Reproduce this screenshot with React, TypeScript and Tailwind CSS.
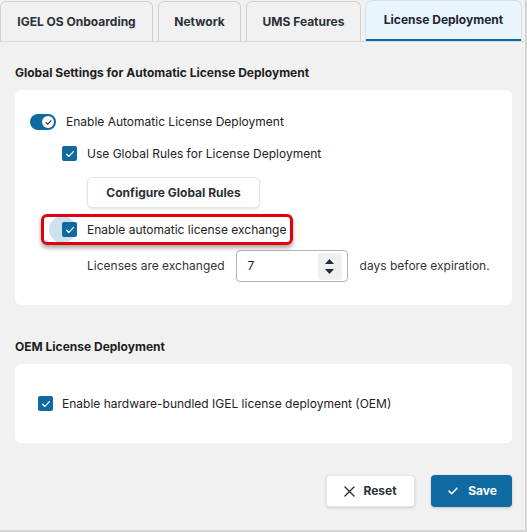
import React from "react";

const Check = ({ className = "" }: { className?: string }) => (
  <svg viewBox="0 0 16 16" className={className} fill="none" stroke="currentColor" strokeWidth="1.8" strokeLinecap="round" strokeLinejoin="round">
    <path d="M3.5 8.2l3 3 6-6.4" />
  </svg>
);

const Checkbox = () => (
  <div className="w-[15px] h-[15px] rounded-[2px] bg-[#0e6aa0] flex items-center justify-center text-white shrink-0">
    <Check className="w-[12px] h-[12px]" />
  </div>
);

const tabs = [
  { label: "IGEL OS Onboarding", w: "w-[153px]" },
  { label: "Network", w: "w-[83px]" },
  { label: "UMS Features", w: "w-[115px]" },
  { label: "License Deployment", w: "w-[155px]", active: true },
];

export default function App() {
  return (
    <div
      className="w-[527px] h-[532px] bg-[#f1f1f1] text-[#222] overflow-hidden border-r-2 border-b-2 border-[#d4d4d4] whitespace-nowrap"
      style={{ fontFamily: "Inter, 'Noto Sans', sans-serif" }}
    >
      <div className="flex gap-[5px] pt-[1px] border-b border-[#d6d6d6] h-[42px]">
        {tabs.map((t) =>
          t.active ? (
            <div
              key={t.label}
              className={`${t.w} h-[40px] rounded-t-[6px] bg-[#e8f5fd] border-b-[2px] border-[#0a6aa0] flex items-center justify-center text-[12px] font-bold text-[#1f2630] shadow-[0_0_0_1px_#d8dde0]`}
            >
              {t.label}
            </div>
          ) : (
            <div
              key={t.label}
              className={`${t.w} h-[40px] rounded-t-[6px] bg-[#f1f1f1] border border-b-0 border-[#d2d2d2] flex items-center justify-center text-[12px] font-bold text-[#2a3038]`}
            >
              {t.label}
            </div>
          )
        )}
      </div>

      <div className="px-[15px]">
        <div className="mt-[23px] text-[12px] font-bold text-[#1e1e1e] leading-[16px]">
          Global Settings for Automatic License Deployment
        </div>

        <div className="mt-[9px] w-[497px] h-[215px] bg-white rounded-[6px] pl-[15px] pt-[24px] relative">
          <div className="flex items-center h-[16px]">
            <div className="w-[26px] h-[16px] rounded-full bg-[#0e6aa0] relative">
              <div className="absolute right-[2px] top-[2px] w-[12px] h-[12px] rounded-full bg-white flex items-center justify-center text-[#1b2a36]">
                <Check className="w-[9px] h-[9px]" />
              </div>
            </div>
            <span className="ml-[10px] text-[12px] leading-[16px]">Enable Automatic License Deployment</span>
          </div>

          <div className="flex items-center mt-[16px] ml-[32px] h-[15px]">
            <Checkbox />
            <span className="ml-[10px] text-[12px] leading-[16px]">Use Global Rules for License Deployment</span>
          </div>

          <div className="ml-[57px] mt-[16px] w-[173px] h-[31px] rounded-[5px] bg-white border border-[#e4e4e4] shadow-[0_1px_2px_rgba(0,0,0,0.12)] flex items-center justify-center text-[12px] font-bold text-[#2a3038]">
            Configure Global Rules
          </div>

          <div className="mt-[6px] ml-[11px] w-[252px] h-[31px] rounded-[6px] border-[3px] border-[#e00010] shadow-[0_3px_4px_rgba(0,0,0,0.35)] flex items-center pl-[18px] relative">
            <div className="absolute left-[5px] top-[-1px] w-[27px] h-[27px] rounded-full bg-[#0e6aa0]/20" />
            <div className="relative">
              <Checkbox />
            </div>
            <span className="ml-[10px] text-[12px] leading-[16px] relative">Enable automatic license exchange</span>
          </div>

          <div className="flex items-center mt-[5px] ml-[57px]">
            <span className="text-[12px] text-[#333]">Licenses are exchanged</span>
            <div className="ml-[11px] w-[112px] h-[32px] rounded-[4px] border border-[#b3b3b3] flex items-center pl-[11px] pr-[5px]">
              <span className="text-[12px] flex-1">7</span>
              <div className="w-[24px] h-[27px] rounded-[3px] bg-[#f0f0f0] flex flex-col items-center justify-center gap-[5px]">
                <svg width="9" height="5" viewBox="0 0 9 5"><path d="M0 5L4.5 0L9 5Z" fill="#1e2a36" /></svg>
                <svg width="9" height="5" viewBox="0 0 9 5"><path d="M0 0L4.5 5L9 0Z" fill="#1e2a36" /></svg>
              </div>
            </div>
            <span className="ml-[12px] text-[12px] text-[#333]">days before expiration.</span>
          </div>
        </div>

        <div className="mt-[34px] text-[12px] font-bold text-[#1e1e1e] leading-[16px]">
          OEM License Deployment
        </div>

        <div className="mt-[9px] w-[497px] h-[79px] bg-white rounded-[6px] pl-[23px] flex items-center">
          <Checkbox />
          <span className="ml-[9px] text-[12px] leading-[16px]">Enable hardware-bundled IGEL license deployment (OEM)</span>
        </div>

        <div className="mt-[32px] w-[497px] flex justify-end gap-[16px]">
          <div className="w-[89px] h-[32px] rounded-[4px] bg-white border border-[#e6e6e6] shadow-[0_1px_3px_rgba(0,0,0,0.15)] flex items-center justify-center gap-[8px] text-[12px] font-bold text-[#2a3038]">
            <svg width="11" height="11" viewBox="0 0 11 11" stroke="#2a3038" strokeWidth="1.4" strokeLinecap="round"><path d="M1 1L10 10M10 1L1 10" /></svg>
            Reset
          </div>
          <div className="w-[81px] h-[32px] rounded-[4px] bg-[#0e6aa0] shadow-[0_1px_3px_rgba(0,0,0,0.2)] flex items-center justify-center gap-[8px] text-[12px] font-bold text-white">
            <Check className="w-[14px] h-[14px]" />
            Save
          </div>
        </div>
      </div>
    </div>
  );
}
